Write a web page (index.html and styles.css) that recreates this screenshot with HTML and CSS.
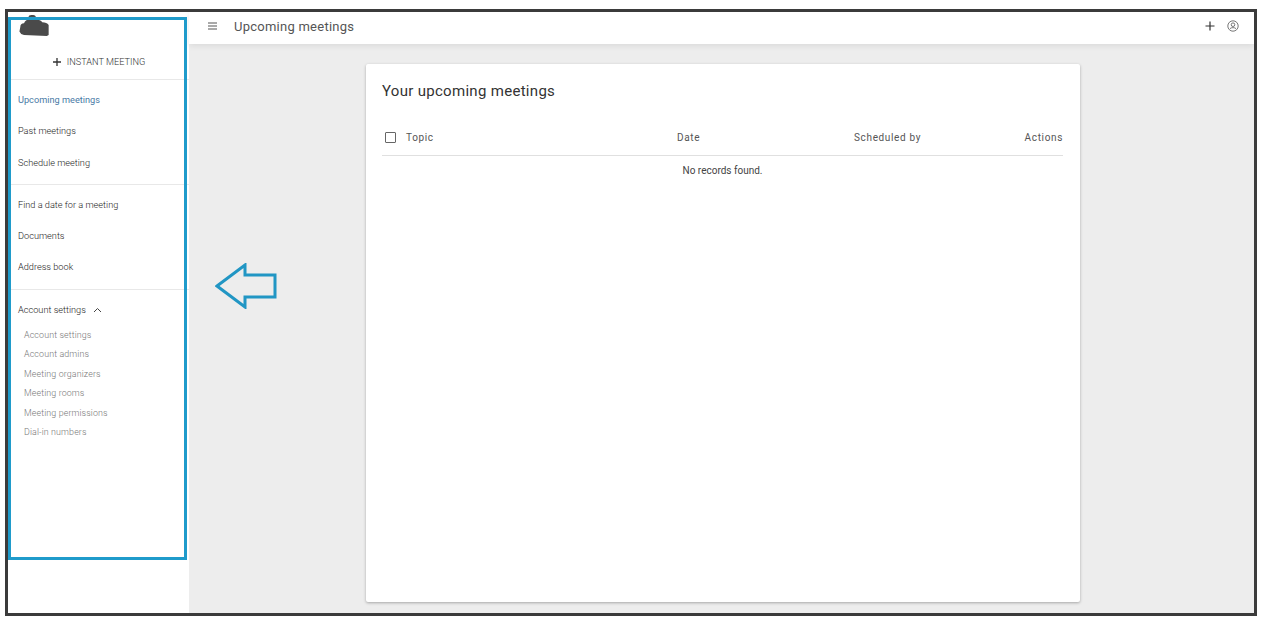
FILE: index.html
```html
<!DOCTYPE html>
<html lang="en">
<head>
  <meta charset="UTF-8">
  <title>Upcoming meetings</title>
  <link rel="stylesheet" href="styles.css">
</head>
<body>

  <div class="frame">

    <!-- Sidebar -->
    <aside class="sidebar">
      <div class="logo-row">
        <svg class="logo" width="31" height="21" viewBox="0 0 33 23">
          <path fill="#4a4a4a" d="M1 13 Q1 9 5 9 Q7 5 10 5 L10 2 Q10 0 13 0 L15 0 Q18 0 18 3 L18 5 Q23 5 25 8 Q30 8 32 11 L32 22 L30 23 L5 22 Q1 21 0 18 Z"/>
        </svg>
      </div>
      <div class="instant-row">
        <svg width="10" height="10" viewBox="0 0 10 10"><path d="M5 1v8M1 5h8" stroke="#333" stroke-width="1.3"/></svg>
        <span>INSTANT MEETING</span>
      </div>

      <nav class="nav-group">
        <a class="nav-item active" href="#">Upcoming meetings</a>
        <a class="nav-item" href="#">Past meetings</a>
        <a class="nav-item" href="#">Schedule meeting</a>
      </nav>

      <nav class="nav-group">
        <a class="nav-item" href="#">Find a date for a meeting</a>
        <a class="nav-item" href="#">Documents</a>
        <a class="nav-item" href="#">Address book</a>
      </nav>

      <div class="settings">
        <div class="settings-head">
          <span>Account settings</span>
          <svg width="9" height="6" viewBox="0 0 9 6"><path d="M1 5l3.5-3.5L8 5" fill="none" stroke="#444" stroke-width="1"/></svg>
        </div>
        <a class="sub-item" href="#">Account settings</a>
        <a class="sub-item" href="#">Account admins</a>
        <a class="sub-item" href="#">Meeting organizers</a>
        <a class="sub-item" href="#">Meeting rooms</a>
        <a class="sub-item" href="#">Meeting permissions</a>
        <a class="sub-item" href="#">Dial-in numbers</a>
      </div>
    </aside>

    <!-- Main area -->
    <div class="content">
      <header class="topbar">
        <div class="topbar-left">
          <svg width="9" height="8" viewBox="0 0 9 8"><path d="M0 1h9M0 4h9M0 7h9" stroke="#555" stroke-width="1"/></svg>
          <span class="page-title">Upcoming meetings</span>
        </div>
        <div class="topbar-right">
          <svg width="10" height="10" viewBox="0 0 10 10"><path d="M5 0.5v9M0.5 5h9" stroke="#333" stroke-width="1.2"/></svg>
          <svg width="12" height="12" viewBox="0 0 12 12" fill="none" stroke="#555" stroke-width="0.8">
            <circle cx="6" cy="6" r="5.2"/>
            <circle cx="6" cy="4.7" r="1.8"/>
            <path d="M3 8.6c1.6-1.3 4.4-1.3 6 0"/>
          </svg>
        </div>
      </header>

      <main class="main">
        <section class="card">
          <h2>Your upcoming meetings</h2>
          <div class="table-head">
            <div class="col-topic"><span class="checkbox"></span>Topic</div>
            <div class="col-date">Date</div>
            <div class="col-by">Scheduled by</div>
            <div class="col-actions">Actions</div>
          </div>
          <p class="empty">No records found.</p>
        </section>
      </main>
    </div>

    <!-- Annotation -->
    <div class="callout-box"></div>
    <svg class="callout-arrow" width="62" height="46" viewBox="0 0 62 46">
      <path d="M2 23 L30 2 L30 12 L60 12 L60 34 L30 34 L30 44 Z" fill="none" stroke="#2196c4" stroke-width="3"/>
    </svg>

  </div>

</body>
</html>
```

FILE: styles.css
```css
/* Basic styling */
html, body {
  height: 100%;
}

body {
  margin: 0;
  padding: 9px 6px 7px 5px;
  box-sizing: border-box;
  height: 623px;
  overflow: hidden;
  background-color: #fff;
  font-family: Roboto, "Liberation Sans", sans-serif;
  color: #333;
}

a {
  color: inherit;
  text-decoration: none;
}

.frame {
  position: relative;
  display: flex;
  height: 100%;
  box-sizing: border-box;
  border: 3px solid #3b3b3b;
  overflow: hidden;
}

/* Sidebar */
.sidebar {
  width: 181px;
  flex-shrink: 0;
  background-color: #fff;
}

.logo-row {
  height: 32px;
  box-sizing: border-box;
  padding: 3px 0 0 11px;
}

.logo {
  display: block;
}

.instant-row {
  height: 36px;
  display: flex;
  align-items: center;
  justify-content: center;
  gap: 5px;
  font-size: 9.2px;
  font-weight: 300;
  color: #333;
  border-bottom: 1px solid #e8e8e8;
  box-sizing: border-box;
}

.nav-group {
  display: flex;
  flex-direction: column;
  padding: 4px 0 6px;
  border-bottom: 1px solid #e8e8e8;
}

.nav-item {
  height: 31.3px;
  line-height: 31.3px;
  padding-left: 10px;
  font-size: 9.2px;
  font-weight: 300;
  color: #222;
}

.nav-item.active {
  font-weight: 400;
  color: #4a7ba6;
}

.settings {
  padding-top: 10px;
}

.settings-head {
  display: flex;
  align-items: center;
  gap: 7px;
  height: 20px;
  padding-left: 10px;
  font-size: 9.2px;
  font-weight: 300;
  color: #222;
  margin-bottom: 6px;
}

.sub-item {
  display: block;
  height: 19.5px;
  line-height: 19.5px;
  padding-left: 16px;
  font-size: 8.9px;
  font-weight: 300;
  letter-spacing: 0.12px;
  color: #777;
}

/* Main area */
.content {
  flex: 1;
  display: flex;
  flex-direction: column;
  min-width: 0;
}

.topbar {
  height: 32px;
  flex-shrink: 0;
  box-sizing: border-box;
  display: flex;
  justify-content: space-between;
  align-items: center;
  padding: 0 15px 4px 19px;
  background-color: #fff;
  box-shadow: 0 2px 6px rgba(0, 0, 0, 0.08);
  position: relative;
}

.topbar-left {
  display: flex;
  align-items: center;
  gap: 17px;
}

.page-title {
  font-size: 13px;
  letter-spacing: 0.25px;
  color: #555;
}

.topbar-right {
  display: flex;
  align-items: center;
  gap: 12px;
}

.main {
  flex: 1;
  min-height: 0;
  background-color: #ededed;
  padding: 20px 174px 11px 177px;
}

.card {
  height: 100%;
  box-sizing: border-box;
  padding: 17px 17px 16px 16px;
  background-color: #fff;
  border-radius: 2px;
  box-shadow: 0 1px 3px rgba(0, 0, 0, 0.3);
}

.card h2 {
  margin: 0;
  font-size: 15px;
  font-weight: 400;
  line-height: 20px;
  letter-spacing: 0.3px;
  color: #333;
}

.table-head {
  display: flex;
  align-items: center;
  height: 36px;
  margin-top: 19px;
  font-size: 10px;
  letter-spacing: 0.65px;
  color: #555;
  border-bottom: 1px solid #e0e0e0;
  box-sizing: border-box;
}

.col-topic {
  display: flex;
  align-items: center;
  gap: 10px;
  width: 295px;
  padding-left: 3px;
  box-sizing: border-box;
}

.checkbox {
  width: 9px;
  height: 9px;
  border: 1px solid #666;
  border-radius: 1px;
}

.col-date {
  width: 177px;
}

.col-by {
  flex: 1;
}

.empty {
  margin: 8px 0 0;
  text-align: center;
  font-size: 10px;
  line-height: 14px;
  color: #444;
}

/* Annotation */
.callout-box {
  position: absolute;
  left: 0;
  top: 5px;
  width: 179px;
  height: 543px;
  box-sizing: border-box;
  border: 3px solid #1f9bcb;
}

.callout-arrow {
  position: absolute;
  left: 207px;
  top: 251px;
}
```
